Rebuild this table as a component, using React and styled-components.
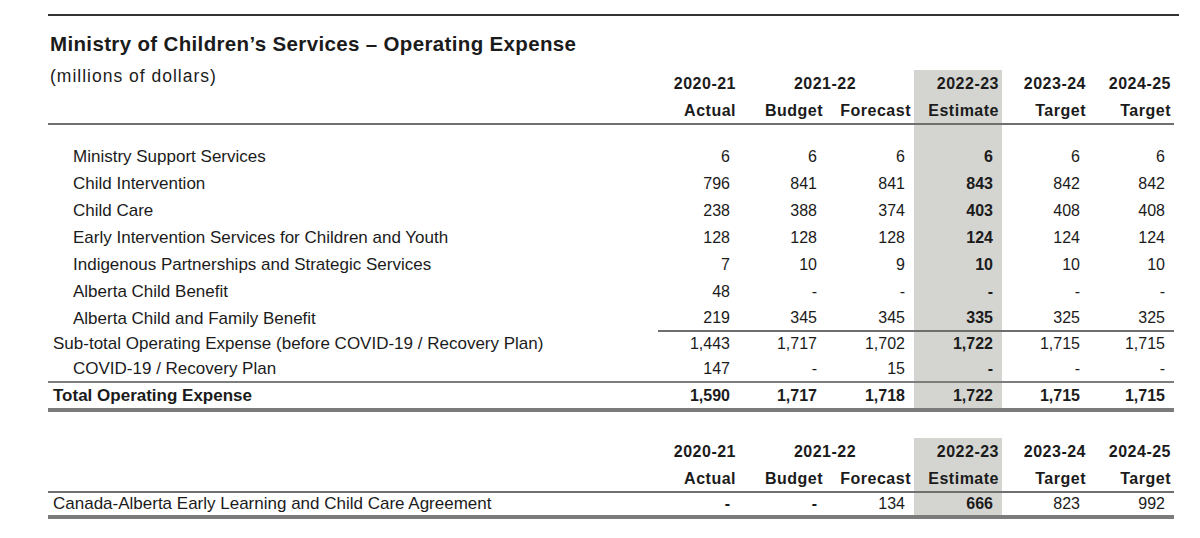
import React from 'react'
import styled, { createGlobalStyle } from 'styled-components'

const years = [
    { year: '2020-21', label: 'Actual' },
    { year: '2021-22', label: 'Budget', span: true },
    { year: null, label: 'Forecast' },
    { year: '2022-23', label: 'Estimate', shade: true },
    { year: '2023-24', label: 'Target' },
    { year: '2024-25', label: 'Target' },
]

const rows = [
    { name: 'Ministry Support Services', values: ['6', '6', '6', '6', '6', '6'], indent: true },
    { name: 'Child Intervention', values: ['796', '841', '841', '843', '842', '842'], indent: true },
    { name: 'Child Care', values: ['238', '388', '374', '403', '408', '408'], indent: true },
    { name: 'Early Intervention Services for Children and Youth', values: ['128', '128', '128', '124', '124', '124'], indent: true },
    { name: 'Indigenous Partnerships and Strategic Services', values: ['7', '10', '9', '10', '10', '10'], indent: true },
    { name: 'Alberta Child Benefit', values: ['48', '-', '-', '-', '-', '-'], indent: true },
    { name: 'Alberta Child and Family Benefit', values: ['219', '345', '345', '335', '325', '325'], indent: true, height: 25 },
    { name: 'Sub-total Operating Expense (before COVID-19 / Recovery Plan)', values: ['1,443', '1,717', '1,702', '1,722', '1,715', '1,715'], subtotal: true, height: 24 },
    { name: 'COVID-19 / Recovery Plan', values: ['147', '-', '15', '-', '-', '-'], indent: true, height: 25 },
    { name: 'Total Operating Expense', values: ['1,590', '1,717', '1,718', '1,722', '1,715', '1,715'], total: true, height: 25 },
]

const widths = [610, 81, 87, 88, 88, 87, 85]

function HeaderRows({ subtitle }) {
    return (
        <thead>
            <tr>
                <LabelHead rowSpan={2}>{subtitle && <Subtitle>{subtitle}</Subtitle>}</LabelHead>
                {years.filter(y => y.year).map(y => (
                    <HeadCell key={y.year} colSpan={y.span ? 2 : 1} $shade={y.shade} $center={y.span} $top>
                        {y.year}
                    </HeadCell>
                ))}
            </tr>
            <tr>
                {years.map((y, i) => (
                    <HeadCell key={i} $shade={y.shade} $rule>{y.label}</HeadCell>
                ))}
            </tr>
        </thead>
    )
}

function Columns() {
    return (
        <colgroup>
            {widths.map((w, i) => <col key={i} style={{ width: w }} />)}
        </colgroup>
    )
}

function App() {
    return (
        <Page>
            <GlobalStyle />
            <TopRule />
            <Title>Ministry of Children’s Services – Operating Expense</Title>
            <Table>
                <Columns />
                <HeaderRows subtitle="(millions of dollars)" />
                <tbody>
                    <Spacer>
                        <td colSpan={4} />
                        <Cell $shade />
                        <td colSpan={2} />
                    </Spacer>
                    {rows.map(r => (
                        <Row key={r.name} $h={r.height} $total={r.total}>
                            <Label $indent={r.indent} $bold={r.total}>{r.name}</Label>
                            {r.values.map((v, i) => (
                                <Num key={i} $shade={i === 3} $bold={i === 3 || r.total} $subtotal={r.subtotal}>
                                    {v}
                                </Num>
                            ))}
                        </Row>
                    ))}
                </tbody>
            </Table>
            <Table $second>
                <Columns />
                <HeaderRows />
                <tbody>
                    <Row $h={22} $total>
                        <Label>Canada-Alberta Early Learning and Child Care Agreement</Label>
                        {['-', '-', '134', '666', '823', '992'].map((v, i) => (
                            <Num key={i} $shade={i === 3} $bold={i === 3 || i < 2}>{v}</Num>
                        ))}
                    </Row>
                </tbody>
            </Table>
        </Page>
    )
}

export default App

const GlobalStyle = createGlobalStyle`
    body {
        margin: 0;
        background: #ffffff;
        color: #1b1b1b;
        font-family: "Liberation Sans", Arial, sans-serif;
    }
`

const Page = styled.div`
    padding: 14px 0 0 48px;
    width: 1152px;
`

const TopRule = styled.div`
    width: 1131px;
    height: 2px;
    background: #333333;
`

const Title = styled.h1`
    margin: 16px 0 0 2px;
    font-size: 20.5px;
    line-height: 24px;
    font-weight: bold;
    letter-spacing: 0.35px;
`

const Table = styled.table`
    margin-top: ${p => (p.$second ? '26px' : '14px')};
    width: 1126px;
    table-layout: fixed;
    border-collapse: collapse;
    border-spacing: 0;
`

const LabelHead = styled.th`
    padding: 0 0 0 2px;
    vertical-align: top;
    text-align: left;
    font-weight: normal;
    border-bottom: 2px solid #707070;
`

const Subtitle = styled.div`
    font-size: 17.5px;
    line-height: 12px;
    letter-spacing: 1px;
    white-space: nowrap;
`

const HeadCell = styled.th`
    padding: ${p => (p.$top ? '2px 3px 2px 0' : '1px 3px 0 0')};
    font-size: 16px;
    line-height: 24px;
    font-weight: bold;
    letter-spacing: 0.5px;
    text-align: ${p => (p.$center ? 'center' : 'right')};
    white-space: nowrap;
    background: ${p => (p.$shade ? '#d4d4d0' : 'transparent')};
    border-bottom: ${p => (p.$rule ? '2px solid #707070' : 'none')};
`

const Spacer = styled.tr`
    height: 19px;
`

const Cell = styled.td`
    padding: 0;
    background: ${p => (p.$shade ? '#d4d4d0' : 'transparent')};
`

const Row = styled.tr`
    line-height: ${p => p.$h || 27}px;

    ${p => p.$total && `
        border-top: 2px solid #7d7d7d;
        border-bottom: 4px solid #7b7b7b;
    `}
`

const Label = styled.td`
    padding: 0 0 0 ${p => (p.$indent ? '25px' : '5px')};
    font-size: 17px;
    font-weight: ${p => (p.$bold ? 'bold' : 'normal')};
    white-space: nowrap;
`

const Num = styled.td`
    padding: 0 9px 0 0;
    font-size: 16px;
    text-align: right;
    font-weight: ${p => (p.$bold ? 'bold' : 'normal')};
    background: ${p => (p.$shade ? '#d4d4d0' : 'transparent')};
    border-top: ${p => (p.$subtotal ? '2px solid #6e6e6e' : 'none')};
`
